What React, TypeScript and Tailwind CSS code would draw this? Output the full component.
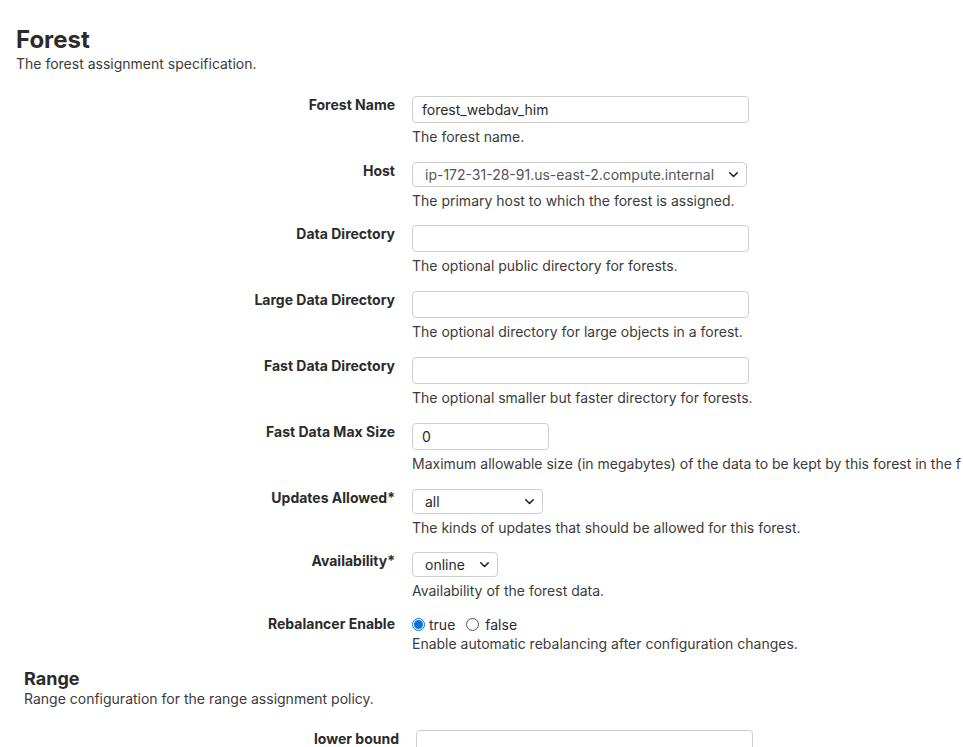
import React from "react";

const font = { fontFamily: "Inter, 'Noto Sans', sans-serif" };

function Chevron() {
  return (
    <svg width="11" height="11" viewBox="0 0 16 16" className="shrink-0">
      <path d="M2.5 5.5 L8 11 L13.5 5.5" fill="none" stroke="#222" strokeWidth="2.2" strokeLinecap="round" strokeLinejoin="round" />
    </svg>
  );
}

function Row({ label, children, help, indent, mb = "mb-[15px]" }: { label: string; children: React.ReactNode; help?: string; indent?: boolean; mb?: string }) {
  return (
    <div className={`flex items-start ${mb}`}>
      <div className={`${indent ? "w-[375px]" : "w-[379px]"} shrink-0 text-right text-[14px] font-bold leading-[18px] text-[#2b2b2b]`}>{label}</div>
      <div className="ml-[17px] flex flex-col">
        {children}
        {help && <div className="mt-[4px] whitespace-nowrap text-[14px] leading-[20px] text-[#3b3b3b]">{help}</div>}
      </div>
    </div>
  );
}

function TextInput({ value, w = "w-[337px]" }: { value?: string; w?: string }) {
  return (
    <div className={`${w} flex h-[27px] items-center rounded-[4px] border border-[#cfcfcf] bg-white pl-[9px] text-[14px] text-[#2b2b2b]`}>
      {value}
    </div>
  );
}

function Select({ value, w, color = "text-[#2b2b2b]" }: { value: string; w: string; color?: string }) {
  return (
    <div className={`${w} flex h-[25px] items-center justify-between rounded-[4px] border border-[#cfcfcf] bg-white pl-[12px] pr-[7px] text-[14px] ${color}`}>
      <span className="whitespace-nowrap">{value}</span>
      <Chevron />
    </div>
  );
}

export default function App() {
  return (
    <div style={font} className="h-[747px] w-[963px] overflow-hidden bg-white text-[#2b2b2b]">
      <div className="pl-[16px] pt-[26px]">
        <h1 className="text-[24px] font-bold leading-[28px] text-[#2b2b2b]">Forest</h1>
        <p className="text-[14px] leading-[20px] text-[#3b3b3b]">The forest assignment specification.</p>
      </div>
      <div className="mt-[22px] flex flex-col pl-[16px]">
        <Row label="Forest Name" help="The forest name.">
          <TextInput value="forest_webdav_him" />
        </Row>
        <Row label="Host" help="The primary host to which the forest is assigned." mb="mb-[14px]">
          <Select value="ip-172-31-28-91.us-east-2.compute.internal" w="w-[335px]" color="text-[#555]" />
        </Row>
        <Row label="Data Directory" help="The optional public directory for forests.">
          <TextInput />
        </Row>
        <Row label="Large Data Directory" help="The optional directory for large objects in a forest.">
          <TextInput />
        </Row>
        <Row label="Fast Data Directory" help="The optional smaller but faster directory for forests.">
          <TextInput />
        </Row>
        <Row label="Fast Data Max Size" help="Maximum allowable size (in megabytes) of the data to be kept by this forest in the f">
          <TextInput value="0" w="w-[137px]" />
        </Row>
        <Row label="Updates Allowed*" help="The kinds of updates that should be allowed for this forest." mb="mb-[14px]">
          <Select value="all" w="w-[131px]" />
        </Row>
        <Row label="Availability*" help="Availability of the forest data." mb="mb-[14px]">
          <Select value="online" w="w-[86px]" />
        </Row>
        <div className="flex items-start">
          <div className="w-[379px] shrink-0 text-right text-[14px] font-bold leading-[18px] text-[#2b2b2b]">Rebalancer Enable</div>
          <div className="ml-[17px] flex flex-col">
            <div className="flex h-[18px] items-center text-[14px] text-[#2b2b2b]">
              <span className="flex h-[13px] w-[13px] items-center justify-center rounded-full border border-[#0b72d9] bg-white">
                <span className="h-[9px] w-[9px] rounded-full bg-[#0b72d9]" />
              </span>
              <span className="ml-[4px]">true</span>
              <span className="ml-[11px] h-[13px] w-[13px] rounded-full border border-[#555] bg-white" />
              <span className="ml-[6px]">false</span>
            </div>
            <div className="mt-[1px] whitespace-nowrap text-[14px] leading-[20px] text-[#3b3b3b]">Enable automatic rebalancing after configuration changes.</div>
          </div>
        </div>
      </div>
      <div className="mt-[15px] pl-[24px]">
        <h2 className="text-[18px] font-bold leading-[20px] text-[#2b2b2b]">Range</h2>
        <p className="text-[14px] leading-[20px] text-[#3b3b3b]">Range configuration for the range assignment policy.</p>
      </div>
      <div className="mt-[21px] pl-[24px]">
        <Row label="lower bound" indent>
          <TextInput />
        </Row>
      </div>
    </div>
  );
}
